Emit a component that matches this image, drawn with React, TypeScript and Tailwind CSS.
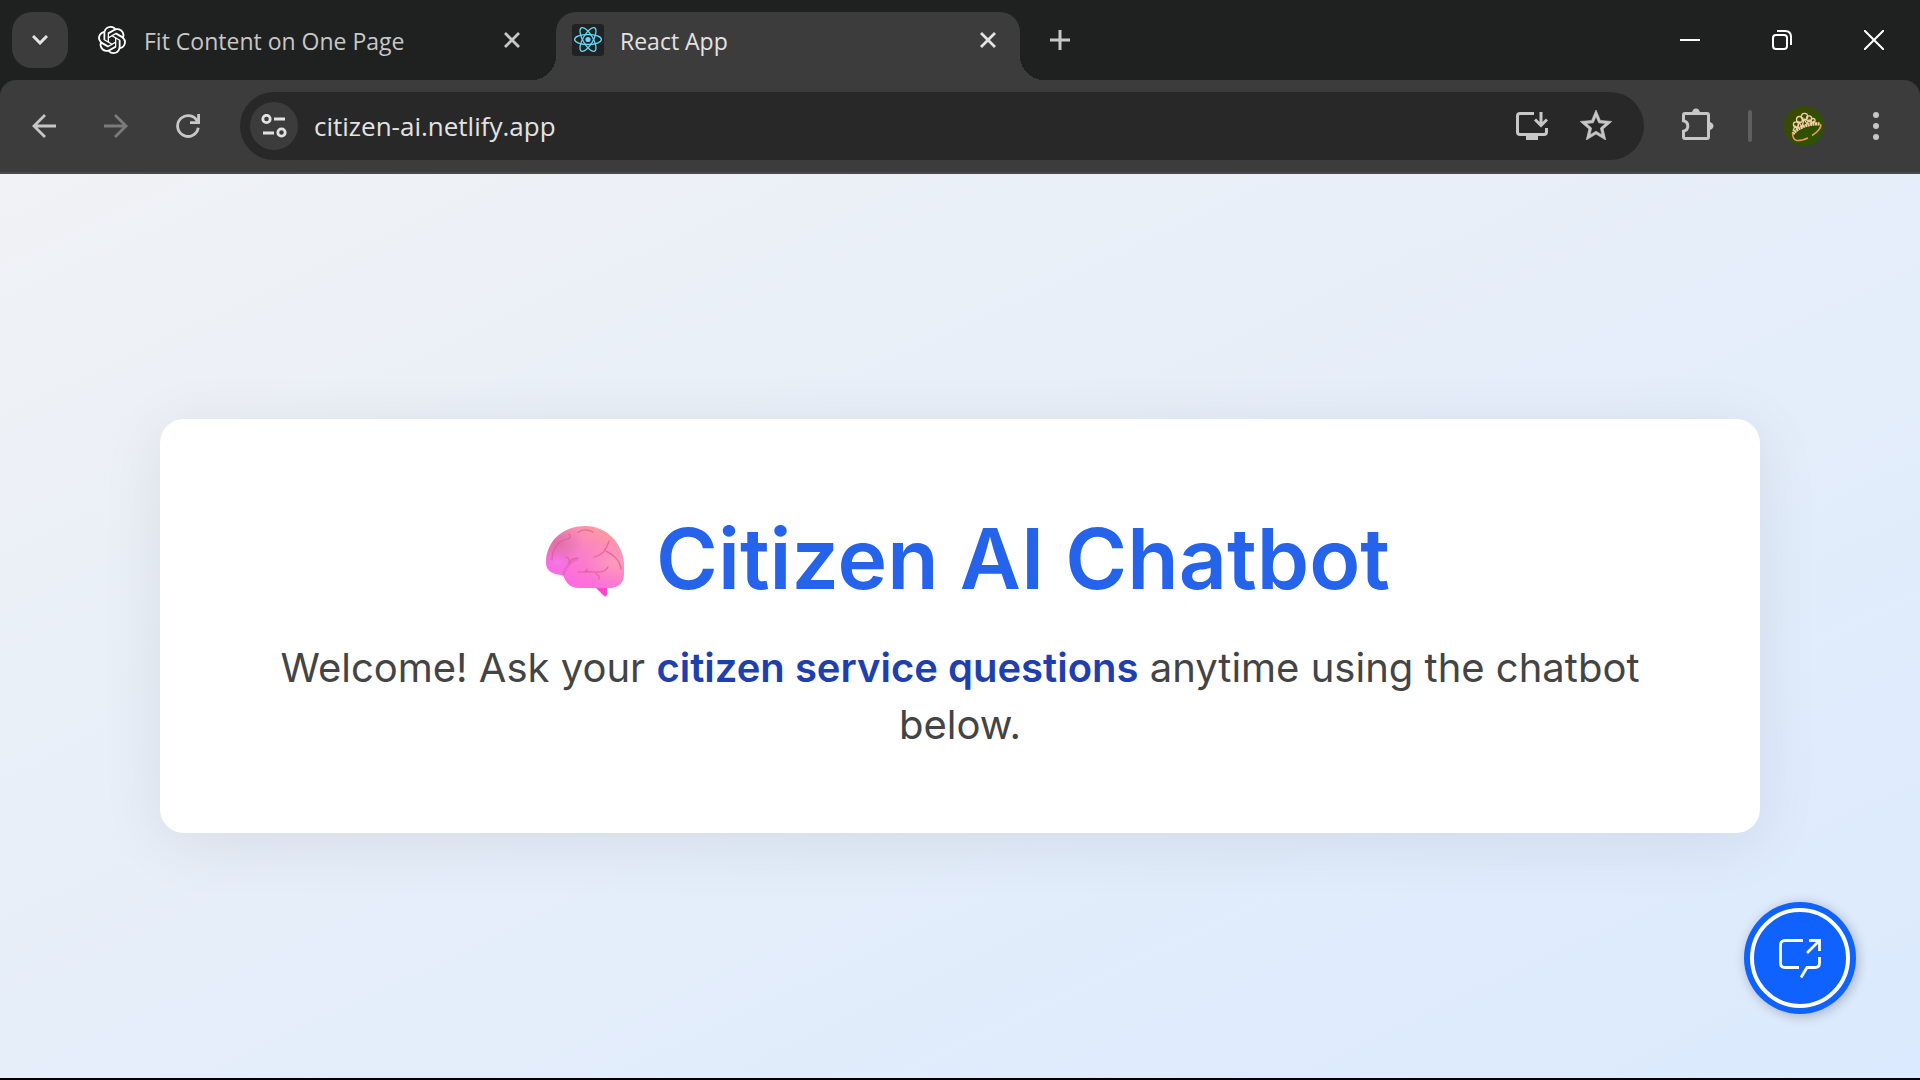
import React from "react";
import { SiOpenai } from "react-icons/si";

const uiFont = "font-['Open_Sans','Noto_Sans',sans-serif]";

function TabCloseIcon() {
  return (
    <svg viewBox="0 0 16 16" className="size-4" fill="none" stroke="currentColor" strokeWidth="2.8" aria-hidden="true">
      <path d="M1 1 15 15M15 1 1 15" />
    </svg>
  );
}

function ReactLogo() {
  return (
    <svg viewBox="0 0 32 32" className="size-8 shrink-0" aria-hidden="true">
      <rect width="32" height="32" rx="3" fill="#222222" />
      <g transform="translate(16 15.5)" fill="none" stroke="#61dafb" strokeWidth="1.3">
        <ellipse rx="13.4" ry="5" />
        <ellipse rx="13.4" ry="5" transform="rotate(60)" />
        <ellipse rx="13.4" ry="5" transform="rotate(120)" />
        <circle r="2.6" fill="#61dafb" stroke="none" />
      </g>
    </svg>
  );
}

function TiaraAvatar() {
  return (
    <svg viewBox="0 0 40 40" className="size-10 rounded-full" aria-hidden="true">
      <defs>
        <linearGradient id="avatarBg" x1="0" y1="0" x2="1" y2="1">
          <stop offset="0.3" stopColor="#3a4a00" />
          <stop offset="0.7" stopColor="#2d5200" />
        </linearGradient>
      </defs>
      <rect width="40" height="40" fill="url(#avatarBg)" />
      <g fill="none" stroke="#f3cfa8" strokeWidth="1.3">
        <path d="M9 28C13 22 24 17 36 18" strokeWidth="3.2" strokeDasharray="2 0.5" />
        <circle cx="12" cy="18.500" r="2.600" />
        <circle cx="15.500" cy="13.500" r="3" />
        <circle cx="20.500" cy="10.500" r="3.200" />
        <circle cx="25" cy="12.500" r="2.600" />
        <circle cx="29" cy="14.500" r="2" />
        <path d="M9 25 11 20 13 23 15 16 18 21 20 13 23 18 25 14 27 18 30 15" />
      </g>
      <g fill="none" stroke="#ee9068" strokeWidth="1.600">
        <path d="M8.500 27.500C9 36 14 36 24 32" />
        <path d="M28 29.500C34 26 38 21 36.500 18" />
      </g>
    </svg>
  );
}

function Brain() {
  return (
    <svg viewBox="0 0 78 71" className="mt-1 h-[71px] w-[78px] shrink-0" role="img" aria-label="Brain">
      <defs>
        <linearGradient id="brainBase" x1="0.85" y1="0.1" x2="0.3" y2="0.9">
          <stop offset="0" stopColor="#ff9c9c" />
          <stop offset="0.45" stopColor="#f982c6" />
          <stop offset="1" stopColor="#ff6be0" />
        </linearGradient>
        <radialGradient id="brainShade" cx="0.14" cy="0.28" r="0.34">
          <stop offset="0" stopColor="#d0688c" stopOpacity="0.65" />
          <stop offset="1" stopColor="#d0689a" stopOpacity="0" />
        </radialGradient>
        <radialGradient id="brainLobe" cx="0.88" cy="0.58" r="0.4">
          <stop offset="0" stopColor="#ff9dbb" />
          <stop offset="1" stopColor="#ff8cc4" stopOpacity="0" />
        </radialGradient>
        <radialGradient id="brainGlow" cx="0.14" cy="0.58" r="0.2">
          <stop offset="0" stopColor="#f67af0" />
          <stop offset="1" stopColor="#e766d6" stopOpacity="0" />
        </radialGradient>
        <path
          id="brainBody"
          d="M0 37C0 15 17 0 39 0C61 0 78 18 78 40V48C78 57 72 62 64 62H33C24 62 20 57 17 49C7 49 0 45 0 37Z"
        />
      </defs>
      <path d="M49 61H61V68C61 71 59 71 57 69Z" fill="#ff45c8" />
      <use href="#brainBody" fill="url(#brainBase)" />
      <use href="#brainBody" fill="url(#brainShade)" />
      <use href="#brainBody" fill="url(#brainLobe)" />
      <use href="#brainBody" fill="url(#brainGlow)" />
      <g fill="none" strokeLinecap="round">
        <path d="M17 49C20 41 23 36 31 33" stroke="#cf55ab" strokeWidth="3" opacity="0.35" />
        <g stroke="#e05a92" strokeWidth="1.2" opacity="0.8">
          <path d="M6 34C6 23 13 14 23 12.500C25 11 24 9 23 8" />
          <path d="M32 6.500C36 3.500 42 3.500 47 6" />
          <path d="M20 31C23 32 24 34 23 38M23 36C25 33 28 32 32 32" />
          <path d="M48 31C54 30 59 27 63 15M60 25C66 29 73 31 75 43" />
          <path d="M32 46H38C40 46 41 45 41 43M40 46C48 45 58 49 62 41M50 48C53 49 53 50 53 53" />
        </g>
      </g>
    </svg>
  );
}

function TabStrip() {
  return (
    <header className="flex h-20 items-stretch">
      <div className="flex items-center pl-3">
        <button aria-label="Search tabs" className="grid size-14 place-items-center rounded-[20px] bg-[#3c3c3c] text-[#e3e3e3]">
          <svg viewBox="0 0 16 10" className="h-2.5 w-4" fill="none" stroke="currentColor" strokeWidth="3" aria-hidden="true">
            <path d="M1 1 8 8 15 1" />
          </svg>
        </button>
      </div>
      <nav aria-label="Tabs" className="flex pt-3">
        <div className="flex h-[68px] w-[488px] items-center pr-9 pb-3 pl-[30px] text-[#c7c7c7]">
          <SiOpenai className="size-7 shrink-0 text-white" aria-hidden="true" />
          <a href="#fit" className="ml-[18px] grow pt-0.5 text-[23px] leading-8 whitespace-nowrap">
            Fit Content on One Page
          </a>
          <button aria-label="Close Fit Content on One Page">
            <TabCloseIcon />
          </button>
        </div>
        <div className="relative flex h-[68px] w-[464px] items-center rounded-t-[20px] bg-[#3c3c3c] pr-6 pb-3 pl-4 text-[#e3e3e3]">
          <span className="absolute bottom-0 -left-6 size-6 bg-[radial-gradient(circle_at_top_left,transparent_24px,#3c3c3c_24px)]" />
          <span className="absolute -right-6 bottom-0 size-6 bg-[radial-gradient(circle_at_top_right,transparent_24px,#3c3c3c_24px)]" />
          <ReactLogo />
          <a href="#app" aria-current="page" className="ml-4 grow pt-0.5 text-[23px] leading-8">
            React App
          </a>
          <button aria-label="Close React App">
            <TabCloseIcon />
          </button>
        </div>
      </nav>
      <button aria-label="New tab" className="ml-6 grid w-8 place-items-center text-[#c7c7c7]">
        <svg viewBox="0 0 20 20" className="size-5" fill="none" stroke="currentColor" strokeWidth="3" aria-hidden="true">
          <path d="M10 0V20M0 10H20" />
        </svg>
      </button>
      <div className="ml-auto flex items-center text-white">
        <button aria-label="Minimize" className="grid h-20 w-[92px] place-items-center">
          <svg viewBox="0 0 20 20" className="size-5" stroke="currentColor" strokeWidth="2" aria-hidden="true">
            <path d="M0 10H20" />
          </svg>
        </button>
        <button aria-label="Restore" className="grid h-20 w-[92px] place-items-center">
          <svg viewBox="0 0 20 20" className="size-5" fill="none" stroke="currentColor" strokeWidth="2" aria-hidden="true">
            <rect x="1" y="5" width="14" height="14" rx="3" />
            <path d="M5 1H13C17 1 19 3 19 7V15" />
          </svg>
        </button>
        <button aria-label="Close window" className="grid h-20 w-[92px] place-items-center">
          <svg viewBox="0 0 20 20" className="size-5" stroke="currentColor" strokeWidth="2" aria-hidden="true">
            <path d="M0 0 20 20M20 0 0 20" />
          </svg>
        </button>
      </div>
    </header>
  );
}

function Toolbar() {
  return (
    <div className="flex h-[94px] items-center rounded-t-2xl border-b-2 border-[#4a4a4c] bg-[#3c3c3c] pr-8 pl-8 text-[#c7c7c7]">
      <div className="flex gap-12">
        <button aria-label="Back">
          <svg viewBox="0 0 24 24" className="size-6" fill="none" stroke="currentColor" strokeWidth="2.8" aria-hidden="true">
            <path d="M24 12H2M13 1 2 12 13 23" />
          </svg>
        </button>
        <button aria-label="Forward" disabled className="text-[#7b7b7b]">
          <svg viewBox="0 0 24 24" className="size-6" fill="none" stroke="currentColor" strokeWidth="2.8" aria-hidden="true">
            <path d="M0 12H22M11 1 22 12 11 23" />
          </svg>
        </button>
        <button aria-label="Reload">
          <svg viewBox="0 0 24 24" className="size-6" fill="none" stroke="currentColor" strokeWidth="2.8" aria-hidden="true">
            <path d="M22.600 0V8.600H14M21.800 8.500A10.400 10.400 0 1 0 22.250 13.800" />
          </svg>
        </button>
      </div>
      <div className="ml-10 flex h-[68px] grow items-center rounded-full bg-[#282828] pr-8 pl-2.5">
        <button aria-label="View site information" className="grid size-12 shrink-0 place-items-center rounded-full bg-[#3c3c3c] text-[#e3e3e3]">
          <svg viewBox="0 0 26 24" className="h-6 w-[26px]" fill="none" stroke="currentColor" strokeWidth="2.8" aria-hidden="true">
            <circle cx="5.500" cy="5" r="3.700" />
            <path d="M13 5H24M2 19H13" />
            <circle cx="20.500" cy="18.500" r="3.700" />
          </svg>
        </button>
        <input
          aria-label="Address"
          defaultValue="citizen-ai.netlify.app"
          className="ml-4 h-12 min-w-0 grow bg-transparent text-[26px] text-[#e3e3e3] outline-none"
        />
        <button aria-label="Install app">
          <svg viewBox="0 0 32 28" className="h-7 w-8" fill="none" stroke="currentColor" strokeWidth="3" aria-hidden="true">
            <path d="M18 1.500H4Q1.500 1.500 1.500 4V20Q1.500 22.500 4 22.500H28Q30.500 22.500 30.500 20V16" />
            <path d="M25 0V13M19 7.500 25 13.500 31 7.500" />
            <path d="M10 26H22" strokeWidth="4" />
          </svg>
        </button>
        <button aria-label="Bookmark this tab" className="mb-0.5 ml-8">
          <svg
            viewBox="2 2 20 19"
            className="h-[30px] w-8"
            fill="currentColor"
            stroke="currentColor"
            strokeWidth="0.4"
            aria-hidden="true"
          >
            <path d="M22 9.240l-7.190-.62L12 2 9.190 8.630 2 9.240l5.460 4.730L5.820 21 12 17.270 18.180 21l-1.630-7.030L22 9.240zM12 15.400l-3.760 2.270 1-4.280-3.320-2.880 4.380-.38L12 6.100l1.710 4.040 4.380.38-3.320 2.880 1 4.280L12 15.400z" />
          </svg>
        </button>
      </div>
      <button aria-label="Extensions" className="ml-9 mb-0.5">
        <svg viewBox="0 0 34 34" className="size-[34px]" fill="none" stroke="currentColor" strokeWidth="3" aria-hidden="true">
          <path d="M5 5.500H27Q28.500 5.500 28.500 7V29Q28.500 30.500 27 30.500H5Q3.500 30.500 3.500 29V23.300C9.200 22 9.200 14 3.500 12.700V7Q3.500 5.500 5 5.500Z" />
          <path d="M12 5A4 4.500 0 0 1 20 5ZM29 14A4.500 4 0 0 1 29 22Z" fill="currentColor" stroke="none" />
        </svg>
      </button>
      <span className="ml-[34px] h-8 w-1 rounded-full bg-[#5f5f5f]" />
      <button aria-label="Profile" className="ml-8">
        <TiaraAvatar />
      </button>
      <button aria-label="Menu" className="ml-10 grid w-6 place-items-center">
        <svg viewBox="0 0 6 28" className="h-7 w-1.5" fill="currentColor" aria-hidden="true">
          <circle cx="3" cy="3" r="3" />
          <circle cx="3" cy="14" r="3" />
          <circle cx="3" cy="25" r="3" />
        </svg>
      </button>
    </div>
  );
}

export default function App() {
  return (
    <div className={`flex min-h-screen flex-col border-b-2 border-black bg-[#1f2120] ${uiFont}`}>
      <TabStrip />
      <Toolbar />
      <main className="relative flex grow items-center justify-center bg-[linear-gradient(to_bottom_right,#f0f2f5,#dbeafe)] px-40 font-['Inter',sans-serif]">
        <section className="w-full rounded-3xl bg-white p-20 text-center shadow-[0_10px_64px_rgba(0,0,0,0.08)]">
          <h1 className="flex items-center justify-center gap-8 pl-4 text-[84px] leading-[120px] font-semibold text-[#2563eb]">
            <Brain />
            Citizen AI Chatbot
          </h1>
          <p className="mt-5 text-[40px] leading-[57px] text-[#444444]">
            Welcome! Ask your <strong className="font-semibold text-[#1e40af]">citizen service questions</strong> anytime using the chatbot below.
          </p>
        </section>
        <button
          aria-label="Open chat"
          className="absolute right-16 bottom-16 grid size-28 place-items-center rounded-full bg-[#0f62fe] shadow-[2px_2px_12px_rgba(0,0,0,0.25)]"
        >
          <span className="grid size-[100px] place-items-center rounded-full border-4 border-white">
            <svg viewBox="0 0 42 39" className="h-[39px] w-[42px]" fill="none" stroke="white" strokeWidth="2.8" aria-hidden="true">
              <path d="M24 1.500H6Q1.500 1.500 1.500 6V24Q1.500 28.500 6 28.500H20" />
              <path d="M30 1.500H40.500V12M40.500 1.500 28 14" />
              <path d="M40.500 18V24Q40.500 28.500 36 28.500H28L22 38.500" />
            </svg>
          </span>
        </button>
      </main>
    </div>
  );
}
